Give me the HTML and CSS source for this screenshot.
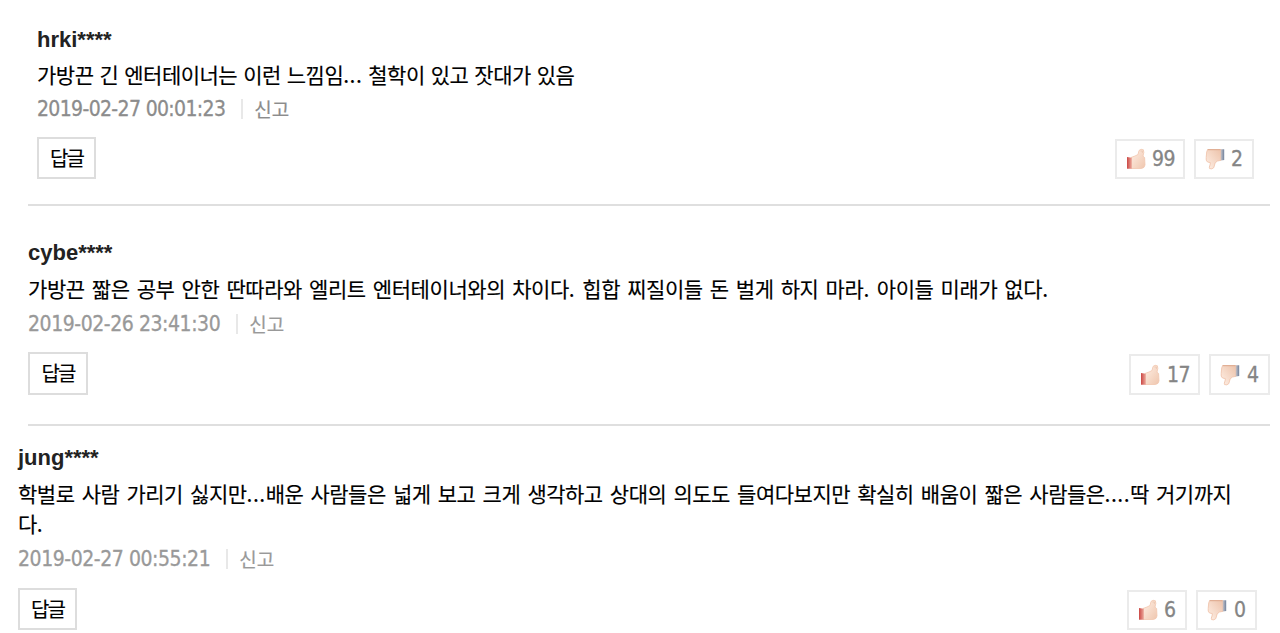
FILE: index.html
```
<!doctype html>
<html lang="ko">
  <head>
    <meta charset="utf-8">
    <title>댓글</title>
    <link rel="stylesheet" href="styles.css">
  </head>
  <body>
    <svg class="defs" width="0" height="0">
      <defs>
        <linearGradient id="skin" x1="0" y1="0" x2="1" y2="1">
          <stop offset="0" stop-color="#fff0e6"/>
          <stop offset="1" stop-color="#efc6ae"/>
        </linearGradient>
        <linearGradient id="palm" x1="0" y1="1" x2="1" y2="0">
          <stop offset="0" stop-color="#fff0e6"/>
          <stop offset="1" stop-color="#ecc2aa"/>
        </linearGradient>
        <linearGradient id="red" x1="0" y1="0" x2="1" y2="0">
          <stop offset="0" stop-color="#cb4744"/>
          <stop offset="1" stop-color="#eba79a"/>
        </linearGradient>
        <linearGradient id="blue" x1="0" y1="0" x2="1" y2="0">
          <stop offset="0" stop-color="#c6c2c6"/>
          <stop offset="1" stop-color="#6f819d"/>
        </linearGradient>
      </defs>
      <symbol id="up" viewBox="0 0 20 22">
        <path d="M5 9.5 L9 8 L12 6.5 L13 2.5 Q15 .4 17.4 1.8 Q18.4 4 17 8.2 L18.6 9.5 L19 17 Q18.6 20 15.5 20.5 H5 Z" fill="url(#skin)" stroke="#f1c6ae" stroke-width=".8"/>
        <path d="M14.4 3 H16.4 V5" fill="none" stroke="#e8bfa8" stroke-width=".6"/>
        <path d="M1 9 L5.8 9.8 V20.7 H1 Z" fill="url(#red)"/>
      </symbol>
      <symbol id="down" viewBox="0 0 20 22">
        <path d="M2.6 1.5 H16 V12.3 L12.5 13 L10.2 14.8 L8.8 19.6 Q7 21.6 4.6 20.6 Q3.8 19.5 5 17 L5.4 14.6 L2.5 14 Q.6 12.5 1.2 9.5 L1.7 4 Z" fill="url(#palm)" stroke="#efc0a7" stroke-width=".8"/>
        <path d="M2.8 1.7 H15.5" stroke="#dca68b" stroke-width=".9"/>
        <path d="M15.8 1.2 H19.2 V12 L15.8 12.6 Z" fill="url(#blue)"/>
      </symbol>
    </svg>

    <div class="comment first">
      <div class="name">hrki****</div>
      <div class="text">가방끈 긴 엔터테이너는 이런 느낌임<span class="dots">...</span> 철학이 있고 잣대가 있음</div>
      <div class="info"><span class="date">2019-02-27 00:01:23</span><span class="report">신고</span></div>
      <div class="tools">
        <button class="reply" type="button">답글</button>
        <div class="votes">
          <div class="vote"><svg class="icon"><use href="#up"/></svg>99</div>
          <div class="vote"><svg class="icon"><use href="#down"/></svg>2</div>
        </div>
      </div>
    </div>

    <div class="comment second">
      <div class="name">cybe****</div>
      <div class="text">가방끈 짧은 공부 안한 딴따라와 엘리트 엔터테이너와의 차이다<span class="dots">.</span> 힙합 찌질이들 돈 벌게 하지 마라<span class="dots">.</span> 아이들 미래가 없다<span class="dots">.</span></div>
      <div class="info"><span class="date">2019-02-26 23:41:30</span><span class="report">신고</span></div>
      <div class="tools">
        <button class="reply" type="button">답글</button>
        <div class="votes">
          <div class="vote"><svg class="icon"><use href="#up"/></svg>17</div>
          <div class="vote"><svg class="icon"><use href="#down"/></svg>4</div>
        </div>
      </div>
    </div>

    <div class="comment third">
      <div class="name">jung****</div>
      <div class="text">학벌로 사람 가리기 싫지만<span class="dots">...</span>배운 사람들은 넓게 보고 크게 생각하고 상대의 의도도 들여다보지만 확실히 배움이 짧은 사람들은<span class="dots">....</span>딱 거기까지<br>다<span class="dots">.</span></div>
      <div class="info"><span class="date">2019-02-27 00:55:21</span><span class="report">신고</span></div>
      <div class="tools">
        <button class="reply" type="button">답글</button>
        <div class="votes">
          <div class="vote"><svg class="icon"><use href="#up"/></svg>6</div>
          <div class="vote"><svg class="icon"><use href="#down"/></svg>0</div>
        </div>
      </div>
    </div>
  </body>
</html>
```
FILE: styles.css
```
body {
  margin: 0;
  height: 633px;
  overflow: hidden;
  background: #fff;
  color: #000;
  font-family: "Noto Sans CJK KR", sans-serif;
}

.defs {
  display: block;
}

.comment {
  box-sizing: border-box;
}

.first {
  height: 206px;
  margin: 0 10px 0 28px;
  padding: 24px 16px 0 9px;
  border-bottom: 2px solid #dfdfdf;
}

.second {
  height: 220px;
  margin: 0 10px 0 28px;
  padding: 32px 0 0;
  border-bottom: 2px solid #dfdfdf;
}

.third {
  margin: 0 23px 0 18px;
  padding-top: 17px;
}

.name {
  height: 30px;
  line-height: 30px;
  font-family: "Liberation Sans", Arial, sans-serif;
  font-size: 22px;
  font-weight: bold;
  color: #222;
}

.first .name {
  line-height: 31px;
}

.text {
  margin-top: 5px;
  font-size: 21px;
  line-height: 30px;
  letter-spacing: -0.5px;
  word-spacing: 1.8px;
  white-space: nowrap;
  -webkit-text-stroke: 0.15px;
}

.first .text {
  letter-spacing: -0.5px;
  word-spacing: 0.6px;
}

.second .text {
  letter-spacing: -0.43px;
  word-spacing: 1.65px;
}

.text .dots {
  letter-spacing: 0.5px;
}

.info {
  display: flex;
  align-items: center;
  height: 30px;
  margin-top: 5px;
  color: #8c8c8c;
}

.second .info,
.third .info {
  margin-top: 6px;
  color: #999;
}

.date {
  font-family: "DejaVu Sans Condensed", "DejaVu Sans", sans-serif;
  font-stretch: condensed;
  font-size: 21px;
  letter-spacing: -0.65px;
  -webkit-text-stroke: 0.3px;
}

.second .date,
.third .date {
  letter-spacing: -0.44px;
}

.report {
  margin-left: 16px;
  padding-left: 11px;
  border-left: 2px solid #e8e8e8;
  font-size: 19px;
  line-height: 20px;
  -webkit-text-stroke: 0.2px;
}

.tools {
  display: flex;
  justify-content: space-between;
  align-items: flex-start;
  margin-top: 13px;
}

.third .tools {
  margin-top: 14px;
}

.reply {
  box-sizing: border-box;
  width: 59px;
  height: 42px;
  padding: 0 0 1px;
  border: 2px solid #ddd;
  background: #fff;
  color: #000;
  font-family: "Noto Sans CJK KR", sans-serif;
  font-size: 20px;
  letter-spacing: -2px;
  -webkit-text-stroke: 0.15px;
}

.second .reply {
  width: 60px;
  height: 43px;
  padding-bottom: 2px;
}

.votes {
  display: flex;
  gap: 9px;
  margin-top: 2px;
}

.vote {
  box-sizing: border-box;
  display: flex;
  align-items: center;
  min-width: 60px;
  height: 40px;
  padding: 0 8px 0 9px;
  border: 2px solid #ebebeb;
  color: #858585;
  font-family: "DejaVu Sans Condensed", "DejaVu Sans", sans-serif;
  font-stretch: condensed;
  font-size: 21px;
  letter-spacing: -0.5px;
  -webkit-text-stroke: 0.3px;
}

.second .vote {
  height: 41px;
  padding-right: 8px;
}

.second .vote:last-child,
.third .vote:last-child {
  min-width: 61px;
}

.icon {
  width: 20px;
  height: 22px;
  margin-right: 6px;
}

.second .icon,
.third .vote:last-child .icon {
  margin-right: 7px;
}
```
